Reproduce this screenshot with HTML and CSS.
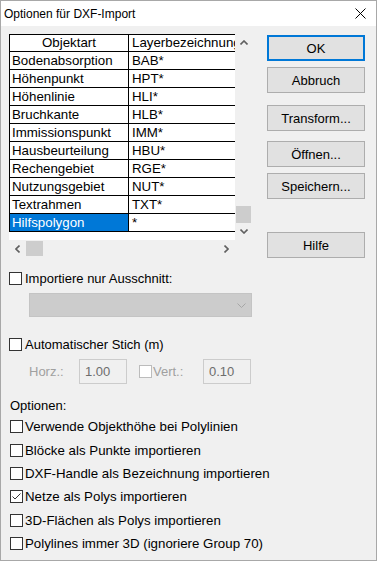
FILE: index.html
```html
<!DOCTYPE html>
<html lang="de">
<head>
  <meta charset="UTF-8">
  <title>Optionen für DXF-Import</title>
  <link rel="stylesheet" href="styles.css">
</head>
<body>
  <div class="window">
    <div class="titlebar">
      <span class="title">Optionen für DXF-Import</span>
      <svg class="close" width="11" height="11" viewBox="0 0 11 11"><path d="M0.5 0.5 L10.5 10.5 M10.5 0.5 L0.5 10.5" stroke="#000" stroke-width="1" fill="none"/></svg>
    </div>

    <div class="content">
      <div class="left">
        <div class="grid">
          <div class="table">
            <div class="row head"><div class="c1">Objektart</div><div class="c2">Layerbezeichnung</div></div>
            <div class="row"><div class="c1">Bodenabsorption</div><div class="c2">BAB*</div></div>
            <div class="row"><div class="c1">Höhenpunkt</div><div class="c2">HPT*</div></div>
            <div class="row"><div class="c1">Höhenlinie</div><div class="c2">HLI*</div></div>
            <div class="row"><div class="c1">Bruchkante</div><div class="c2">HLB*</div></div>
            <div class="row"><div class="c1">Immissionspunkt</div><div class="c2">IMM*</div></div>
            <div class="row"><div class="c1">Hausbeurteilung</div><div class="c2">HBU*</div></div>
            <div class="row"><div class="c1">Rechengebiet</div><div class="c2">RGE*</div></div>
            <div class="row"><div class="c1">Nutzungsgebiet</div><div class="c2">NUT*</div></div>
            <div class="row"><div class="c1">Textrahmen</div><div class="c2">TXT*</div></div>
            <div class="row sel"><div class="c1">Hilfspolygon</div><div class="c2">*</div></div>
          </div>
          <div class="vscroll">
            <div class="arrow"><svg width="8" height="5" viewBox="0 0 8 5"><path d="M0.5 4.5 L4 1 L7.5 4.5" stroke="#606060" stroke-width="1.6" fill="none"/></svg></div>
            <div class="vtrack"><div class="vthumb"></div></div>
            <div class="arrow"><svg width="8" height="5" viewBox="0 0 8 5"><path d="M0.5 0.5 L4 4 L7.5 0.5" stroke="#606060" stroke-width="1.6" fill="none"/></svg></div>
          </div>
          <div class="hscroll">
            <div class="arrow"><svg width="5" height="8" viewBox="0 0 5 8"><path d="M4.5 0.5 L1 4 L4.5 7.5" stroke="#606060" stroke-width="1.6" fill="none"/></svg></div>
            <div class="htrack"><div class="hthumb"></div></div>
            <div class="arrow"><svg width="5" height="8" viewBox="0 0 5 8"><path d="M0.5 0.5 L4 4 L0.5 7.5" stroke="#606060" stroke-width="1.6" fill="none"/></svg></div>
          </div>
          <div class="corner"></div>
        </div>

        <label class="check first"><span class="box"></span>Importiere nur Ausschnitt:</label>
        <div class="combo">
          <svg width="9" height="5" viewBox="0 0 9 5"><path d="M0.5 0.5 L4.5 4.5 L8.5 0.5" stroke="#a6a6a6" stroke-width="1" fill="none"/></svg>
        </div>

        <label class="check stich"><span class="box"></span>Automatischer Stich (m)</label>
        <div class="stich-row">
          <span class="muted horz">Horz.:</span>
          <span class="field">1.00</span>
          <span class="box disabled"></span>
          <span class="muted vert">Vert.:</span>
          <span class="field">0.10</span>
        </div>

        <div class="opt-label">Optionen:</div>
        <div class="options">
          <label class="check opt"><span class="box"></span>Verwende Objekthöhe bei Polylinien</label>
          <label class="check opt"><span class="box"></span>Blöcke als Punkte importieren</label>
          <label class="check opt"><span class="box"></span>DXF-Handle als Bezeichnung importieren</label>
          <label class="check opt"><span class="box"><svg width="11" height="11" viewBox="0 0 11 11"><path d="M1.5 5.5 L4 8 L9.5 2.5" stroke="#333" stroke-width="1" fill="none"/></svg></span>Netze als Polys importieren</label>
          <label class="check opt"><span class="box"></span>3D-Flächen als Polys importieren</label>
          <label class="check opt"><span class="box"></span>Polylines immer 3D (ignoriere Group 70)</label>
        </div>
      </div>

      <div class="buttons">
        <button class="btn default">OK</button>
        <button class="btn b-abbruch">Abbruch</button>
        <button class="btn b-transform">Transform...</button>
        <button class="btn b-open">Öffnen...</button>
        <button class="btn b-save">Speichern...</button>
        <button class="btn b-help">Hilfe</button>
      </div>
    </div>
  </div>
</body>
</html>
```

FILE: styles.css
```css
body {
  margin: 0;
  background: #fff;
  font-family: 'Liberation Sans', Arial, sans-serif;
  font-size: 13px;
  color: #000;
}
.window {
  width: 377px;
  height: 561px;
  box-sizing: border-box;
  border: 1px solid #a8a8a8;
  background: #f0f0f0;
}
.titlebar {
  height: 25px;
  background: #fff;
  display: flex;
  align-items: center;
  padding-left: 3px;
}
.title {
  font-size: 12px;
}
.close {
  margin-left: auto;
  margin-right: 10px;
}
.content {
  display: flex;
  padding: 8px 0 0 8px;
}
.left {
  width: 243px;
}

/* list grid */
.grid {
  display: grid;
  grid-template-columns: 226px 17px;
  grid-template-rows: 206px 18px;
  width: 243px;
}
.table {
  background: #fff;
  overflow: hidden;
  border-top: 1px solid #000;
  font-size: 13.3px;
}
.row {
  display: flex;
  height: 18px;
  line-height: 17px;
  box-sizing: border-box;
  border-bottom: 1px solid #000;
  width: max-content;
}
.row.head {
  height: 17px;
  line-height: 16px;
}
.c1 {
  width: 120px;
  box-sizing: border-box;
  border-left: 1px solid #000;
  border-right: 1px solid #000;
  padding-left: 2px;
  white-space: nowrap;
  overflow: hidden;
}
.c2 {
  width: 131px;
  box-sizing: border-box;
  border-right: 1px solid #000;
  padding-left: 3px;
  white-space: nowrap;
}
.head .c1 {
  text-align: center;
  padding-left: 0;
}
.sel .c1 {
  background: #0078d7;
  color: #fff;
}
.vscroll {
  display: flex;
  flex-direction: column;
}
.arrow {
  width: 17px;
  height: 17px;
  display: flex;
  align-items: center;
  justify-content: center;
  flex-shrink: 0;
}
.vtrack {
  flex: 1;
  display: flex;
  align-items: flex-end;
  justify-content: center;
}
.vthumb {
  width: 15px;
  height: 17px;
  background: #cdcdcd;
}
.hscroll {
  display: flex;
  height: 18px;
}
.hscroll .arrow {
  height: 18px;
}
.htrack {
  flex: 1;
  padding-top: 1px;
}
.hthumb {
  width: 17px;
  height: 15px;
  background: #cdcdcd;
}

/* checkboxes */
.check {
  display: flex;
  align-items: center;
  height: 17px;
  white-space: nowrap;
}
.box {
  width: 13px;
  height: 13px;
  box-sizing: border-box;
  border: 1px solid #333;
  background: #fff;
  margin-right: 3px;
  flex-shrink: 0;
  display: flex;
  align-items: center;
  justify-content: center;
}
.box.disabled {
  border-color: #bcbcbc;
}
.check.first {
  margin-top: 12px;
}
.combo {
  margin: 6px 0 0 20px;
  height: 24px;
  box-sizing: border-box;
  border: 1px solid #c4c4c4;
  background: #cccccc;
  display: flex;
  align-items: center;
  justify-content: flex-end;
  padding-right: 5px;
}
.check.stich {
  margin-top: 19px;
}
.stich-row {
  display: flex;
  align-items: center;
  margin: 6px 0 0 20px;
  height: 25px;
}
.muted {
  color: #a0a0a0;
}
.horz {
  width: 50px;
}
.field {
  width: 48px;
  height: 25px;
  box-sizing: border-box;
  border: 1px solid #cccccc;
  color: #6d6d6d;
  padding: 4px 0 0 5px;
}
.stich-row .box {
  margin-left: 12px;
  margin-right: 1px;
}
.vert {
  width: 50px;
}
.opt-label {
  margin: 14px 0 0 1px;
  line-height: 15px;
}
.options {
  margin-top: 2px;
}
.check.opt {
  height: 23.4px;
  padding-left: 1px;
  font-size: 13.3px;
}
.check.opt .box {
  margin-right: 2px;
}

/* buttons */
.buttons {
  display: flex;
  flex-direction: column;
  margin-left: 15px;
  margin-top: 1px;
  width: 98px;
}
.btn {
  height: 26px;
  box-sizing: border-box;
  border: 1px solid #adadad;
  background: #e1e1e1;
  font-family: 'Liberation Sans', Arial, sans-serif;
  font-size: 13px;
  color: #000;
  padding: 0;
}
.btn.default {
  border: 2px solid #0078d7;
}
.b-abbruch {
  margin-top: 6px;
}
.b-transform {
  margin-top: 12px;
}
.b-open {
  margin-top: 10px;
}
.b-save {
  margin-top: 6px;
}
.b-help {
  margin-top: 33px;
}
```
